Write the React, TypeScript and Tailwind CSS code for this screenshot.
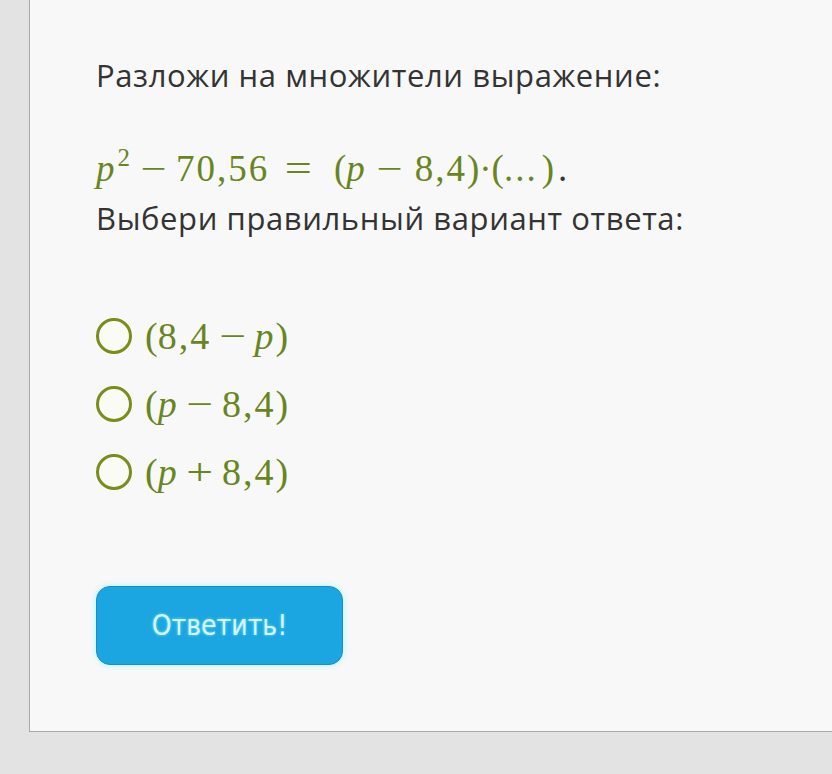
import React from "react";

const serif = { fontFamily: '"Liberation Serif", serif' };

// operator glyph stretched to the wider math-font shape
function Op({ c, className = "" }: { c: string; className?: string }) {
  return <span className={`inline-block scale-x-[1.25] ${className}`}>{c}</span>;
}

function Radio() {
  return <span className="inline-block h-[36px] w-[36px] shrink-0 rounded-full border-[3px] border-[#7a8c1a] bg-[#fbfbf6]" />;
}

function Opt({ children }: { children: React.ReactNode }) {
  return (
    <div className="flex h-[68px] items-center gap-[13px]">
      <Radio />
      <span className="text-[38px] leading-none text-[#68861e]" style={serif}>
        {children}
      </span>
    </div>
  );
}

export default function App() {
  return (
    <div className="flex h-[774px] w-[832px] flex-col overflow-hidden bg-[#e3e3e3]">
      <div
        className="ml-[29px] h-[732px] border-b border-l border-[#a9a9a9] bg-[#f8f8f8] pl-[66px] pt-[55px] text-[#333]"
        style={{ fontFamily: '"Open Sans", sans-serif' }}
      >
        <p className="text-[31px] leading-[41px] tracking-[0.6px]">Разложи на множители выражение:</p>
        <p className="mt-[53px] whitespace-nowrap text-[37px] leading-[40px]" style={serif}>
          <span className="text-[#68861e]">
            <i>p</i>
            <span className="relative -top-[15px] ml-[3px] text-[25px]">2</span>
            <Op c="−" className="ml-[13px] mr-[12px]" />
            <span className="tracking-[2px]">70,56</span>
            <span className="ml-[19px] mr-[25px] inline-block scale-x-[1.3]">=</span>
            (<i>p</i>
            <Op c="−" className="ml-[14px] mr-[15px]" />
            <span className="tracking-[2px]">8,4</span>)·(<span className="tracking-[2px]">...</span>
            <span className="ml-[4px]">)</span>
          </span>
          <span className="ml-[4px]">.</span>
        </p>
        <p className="mt-[5px] text-[31px] leading-[41px] tracking-[0.6px]">Выбери правильный вариант ответа:</p>
        <div className="mt-[63px] flex flex-col">
          <Opt>
            (<span className="tracking-[2px]">8,4</span>
            <Op c="−" className="ml-[11px] mr-[11px]" />
            <i>p</i>
            <span className="ml-[2px]">)</span>
          </Opt>
          <Opt>
            (<i>p</i>
            <Op c="−" className="ml-[12px] mr-[12px]" />
            <span className="tracking-[2px]">8,4</span>)
          </Opt>
          <Opt>
            (<i>p</i>
            <Op c="+" className="ml-[12px] mr-[12px]" />
            <span className="tracking-[2px]">8,4</span>)
          </Opt>
        </div>
        <button
          type="button"
          className="mt-[80px] flex h-[79px] w-[247px] items-center justify-center rounded-[14px] border border-[#1590c8] bg-[#1ba5e1] text-[28px] text-[#d6f6ff] shadow-[0_0_6px_#aef3ff] [text-shadow:0_0_3px_#6fe6ff]"
          style={{ fontFamily: '"DejaVu Sans Condensed", "DejaVu Sans", sans-serif' }}
        >
          Ответить!
        </button>
      </div>
    </div>
  );
}
